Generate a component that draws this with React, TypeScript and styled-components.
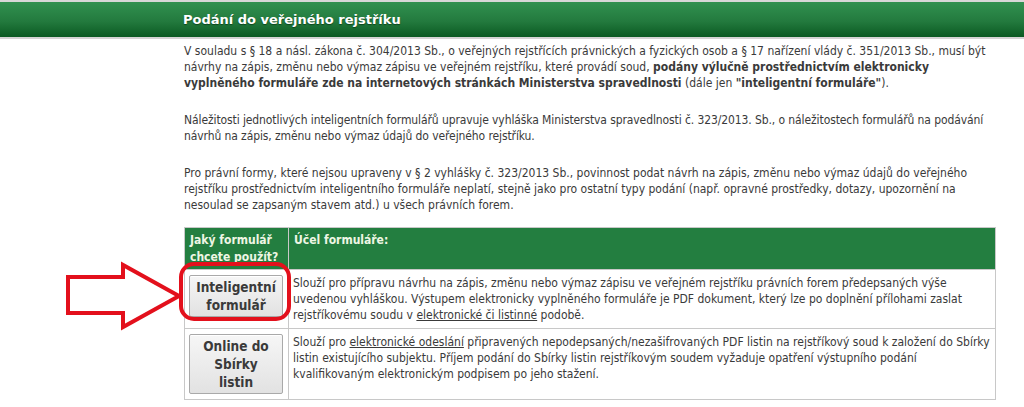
import React from 'react';
import styled, { createGlobalStyle } from 'styled-components';

const GlobalStyle = createGlobalStyle`
  html, body {
    margin: 0;
    padding: 0;
    background: #ffffff;
  }
  body {
    font-family: "DejaVu Sans Condensed", "DejaVu Sans", Verdana, sans-serif;
    font-size: 12px;
    color: #3a3a3a;
  }
`;

const Page = styled.div`
  width: 1024px;
  border-top: 2px solid #d8d8d8;
`;

const TitleBar = styled.div`
  height: 35px;
  background: linear-gradient(to bottom, #319150 0%, #237a3e 55%, #0b5a22 100%);
  border-bottom: 2px solid #d4d4d4;
  display: flex;
  align-items: center;
  padding-left: 183px;
`;

const Title = styled.h1`
  margin: 0;
  font-family: "DejaVu Sans", Verdana, sans-serif;
  font-size: 13px;
  font-weight: 700;
  color: #ffffff;
  text-shadow: 0 1px 1px rgba(0, 40, 10, 0.6);
`;

const Content = styled.div`
  width: 812px;
  margin-left: 184px;
  padding-top: 4px;
`;

const Para = styled.p<{ $tight?: boolean }>`
  margin: 0 0 21px;
  line-height: 16px;
  letter-spacing: ${(p) => (p.$tight ? '-0.1px' : 'normal')};

  &:last-of-type {
    margin-bottom: 14px;
  }
`;

const Table = styled.table`
  width: 100%;
  border-collapse: collapse;
  border: 1px solid #c8c8c8;
`;

const HeadCell = styled.th<{ $narrow?: boolean }>`
  background: #237e40;
  color: #eef6e4;
  font-weight: 700;
  text-align: left;
  vertical-align: top;
  padding: 4px 5px 3px 5px;
  line-height: 17px;
  border: 1px solid #c8c8c8;
  width: ${(p) => (p.$narrow ? '92px' : 'auto')};
`;

const Cell = styled.td`
  position: relative;
  vertical-align: top;
  padding: 5px 5px 5px 4px;
  line-height: 16px;
  border: 1px solid #c8c8c8;
`;

const FormButton = styled.button`
  width: 94px;
  padding: 2px 2px;
  display: block;
  white-space: pre-line;
  font-family: "DejaVu Sans Condensed", "DejaVu Sans", Verdana, sans-serif;
  font-size: 13.5px;
  font-weight: 700;
  line-height: 18px;
  color: #3a3a3a;
  background: linear-gradient(to bottom, #f6f6f6 0%, #e2e2e2 100%);
  border: 1px solid #a9a9a9;
  border-radius: 2px;
  box-shadow: inset 0 1px 0 #ffffff;
`;

const TextLink = styled.a`
  color: inherit;
  text-decoration: underline;
`;

const Ring = styled.div`
  position: absolute;
  left: -6px;
  top: -8px;
  width: 104px;
  height: 51px;
  border: 4px solid #e3101c;
  border-radius: 15px;
  pointer-events: none;
`;

const Arrow = styled.svg`
  position: absolute;
  left: -119px;
  top: -7px;
  overflow: visible;
  pointer-events: none;
`;

const rows = [
  {
    label: 'Inteligentní\nformulář',
    marked: true,
    text: (
      <>
        Slouží pro přípravu návrhu na zápis, změnu nebo výmaz zápisu ve veřejném rejstříku právních forem
        předepsaných výše uvedenou vyhláškou. Výstupem elektronicky vyplněného formuláře je PDF dokument,
        který lze po doplnění přílohami zaslat rejstříkovému soudu v{' '}
        <TextLink href="#">elektronické či listinné</TextLink> podobě.
      </>
    ),
  },
  {
    label: 'Online do\nSbírky\nlistin',
    marked: false,
    text: (
      <>
        Slouží pro <TextLink href="#">elektronické odeslání</TextLink> připravených
        nepodepsaných/nezašifrovaných PDF listin na rejstříkový soud k založení do Sbírky listin existujícího
        subjektu. Příjem podání do Sbírky listin rejstříkovým soudem vyžaduje opatření výstupního podání
        kvalifikovaným elektronickým podpisem po jeho stažení.
      </>
    ),
  },
];

const App: React.FC = () => (
  <Page>
    <GlobalStyle />
    <TitleBar>
      <Title>Podání do veřejného rejstříku</Title>
    </TitleBar>
    <Content>
      <Para>
        V souladu s § 18 a násl. zákona č. 304/2013 Sb., o veřejných rejstřících právnických a fyzických osob a
        § 17 nařízení vlády č. 351/2013 Sb., musí být návrhy na zápis, změnu nebo výmaz zápisu ve veřejném
        rejstříku, které provádí soud,{' '}
        <b>
          podány výlučně prostřednictvím elektronicky vyplněného formuláře zde na internetových stránkách
          Ministerstva spravedlnosti
        </b>{' '}
        (dále jen <b>"inteligentní formuláře"</b>).
      </Para>
      <Para $tight>
        Náležitosti jednotlivých inteligentních formulářů upravuje vyhláška Ministerstva spravedlnosti č.
        323/2013. Sb., o náležitostech formulářů na podávání návrhů na zápis, změnu nebo výmaz údajů do
        veřejného rejstříku.
      </Para>
      <Para>
        Pro právní formy, které nejsou upraveny v § 2 vyhlášky č. 323/2013 Sb., povinnost podat návrh na
        zápis, změnu nebo výmaz údajů do veřejného rejstříku prostřednictvím inteligentního formuláře
        neplatí, stejně jako pro ostatní typy podání (např. opravné prostředky, dotazy, upozornění na nesoulad
        se zapsaným stavem atd.) u všech právních forem.
      </Para>
      <Table>
        <thead>
          <tr>
            <HeadCell $narrow>Jaký formulář chcete použít?</HeadCell>
            <HeadCell>Účel formuláře:</HeadCell>
          </tr>
        </thead>
        <tbody>
          {rows.map((row) => (
            <tr key={row.label}>
              <Cell>
                <FormButton type="button">{row.label}</FormButton>
                {row.marked && (
                  <>
                    <Ring />
                    <Arrow width="116" height="66" viewBox="0 0 116 66">
                      <polygon
                        points="2,14 57,14 57,2 113,33 57,64 57,50 2,50"
                        fill="#ffffff"
                        stroke="#e3101c"
                        strokeWidth="4"
                        strokeLinejoin="miter"
                      />
                    </Arrow>
                  </>
                )}
              </Cell>
              <Cell>{row.text}</Cell>
            </tr>
          ))}
        </tbody>
      </Table>
    </Content>
  </Page>
);

export default App;
